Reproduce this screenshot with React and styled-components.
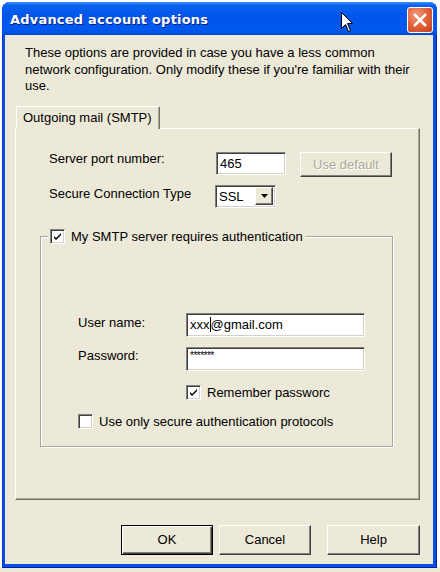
import React from 'react';
import styled, { createGlobalStyle } from 'styled-components';

const GlobalStyle = createGlobalStyle`
  html, body {
    margin: 0;
    padding: 0;
  }

  body {
    background: linear-gradient(to bottom, #fff 567px, #ECE9D8 567px);
    font-family: "Liberation Sans", Arial, sans-serif;
    font-size: 13px;
    color: #000;
  }

  #root {
    width: 440px;
    height: 572px;
    overflow: hidden;
  }
`;

const Window = styled.div`
  margin: 2px 3px 0 2px;
  width: 435px;
  height: 566px;
  display: flex;
  flex-direction: column;
  background: #0A4FE4;
  border-radius: 8px 8px 0 0;
  box-shadow: inset 1px 0 0 #0831D9, inset -1px -1px 0 #001EA0;
  overflow: hidden;
`;

const TitleBar = styled.div`
  position: relative;
  height: 33px;
  flex-shrink: 0;
  display: flex;
  align-items: flex-start;
  justify-content: space-between;
  background: linear-gradient(
    to bottom,
    #3C8EFF 0%,
    #0B62F0 10%,
    #0055EA 45%,
    #0059EE 85%,
    #0049D6 100%
  );
`;

const Title = styled.div`
  margin: 10px 0 0 8px;
  font-family: "DejaVu Sans", Verdana, sans-serif;
  font-weight: bold;
  font-size: 13px;
  letter-spacing: 0.2px;
  color: #fff;
  text-shadow: 1px 1px 0 #0A1E82;
`;

const CloseButton = styled.div`
  margin: 5px 4px 0 0;
  width: 24px;
  height: 24px;
  border: 1px solid #fff;
  border-radius: 3px;
  background: radial-gradient(circle at 35% 30%, #F09A7C 0%, #E06640 45%, #C4411D 100%);
  display: flex;
  align-items: center;
  justify-content: center;
`;

const Cursor = styled.svg`
  position: absolute;
  left: 339px;
  top: 10px;
`;

const Body = styled.div`
  flex: 1;
  margin: 0 4px 4px 3px;
  background: #ECE9D8;
  display: flex;
  flex-direction: column;
`;

const Intro = styled.p`
  margin: 10px 0 0 20px;
  line-height: 16.5px;
`;

const TabStrip = styled.div`
  margin: 11px 0 0 11px;
  display: flex;
`;

const Tab = styled.div`
  position: relative;
  z-index: 1;
  box-sizing: border-box;
  height: 23px;
  margin-bottom: -1px;
  padding: 3px 7px 0 6px;
  background: #ECE9D8;
  border-top: 1px solid #fff;
  border-left: 1px solid #fff;
  border-right: 1px solid #716F64;
  box-shadow: inset -1px 0 0 #ACA899;
  border-radius: 2px 2px 0 0;
  white-space: nowrap;
`;

const Panel = styled.div`
  box-sizing: border-box;
  margin-left: 10px;
  width: 405px;
  height: 372px;
  padding-top: 23px;
  border-top: 1px solid #fff;
  border-left: 1px solid #fff;
  border-right: 1px solid #716F64;
  border-bottom: 1px solid #716F64;
  box-shadow: inset -1px -1px 0 #ACA899;
`;

const Settings = styled.div`
  padding-left: 33px;
`;

const Row = styled.div`
  display: grid;
  grid-template-columns: ${p => p.$label}px auto auto;
  justify-content: start;
  align-items: start;
  margin-top: ${p => p.$top || 0}px;
`;

const Label = styled.span`
  line-height: 16px;
  margin-top: ${p => p.$offset || 0}px;
  white-space: nowrap;
`;

const Field = styled.div`
  box-sizing: border-box;
  width: ${p => p.$w}px;
  height: ${p => p.$h || 23}px;
  padding: 0 3px;
  background: #fff;
  border-top: 1px solid #808080;
  border-left: 1px solid #808080;
  border-right: 1px solid #fff;
  border-bottom: 1px solid #fff;
  box-shadow: inset 1px 1px 0 #404040, inset -1px -1px 0 #D4D0C8;
  display: flex;
  align-items: ${p => (p.$top ? 'flex-start' : 'center')};
  white-space: nowrap;
  overflow: hidden;
`;

const Caret = styled.span`
  display: inline-block;
  width: 1px;
  height: 15px;
  background: #000;
  vertical-align: middle;
`;

const Stars = styled.span`
  font-size: 10px;
  letter-spacing: -0.5px;
  margin-top: 2px;
`;

const SelectBox = styled(Field)`
  justify-content: space-between;
  padding: 0 2px 0 3px;
`;

const DropButton = styled.div`
  box-sizing: border-box;
  width: 18px;
  height: 18px;
  background: #ECE9D8;
  border-top: 1px solid #fff;
  border-left: 1px solid #fff;
  border-right: 1px solid #404040;
  border-bottom: 1px solid #404040;
  box-shadow: inset -1px -1px 0 #808080;
  display: flex;
  align-items: center;
  justify-content: center;
`;

const Button = styled.div`
  box-sizing: border-box;
  width: ${p => p.$w || 92}px;
  height: ${p => p.$h || 30}px;
  margin-left: ${p => p.$gap || 0}px;
  display: flex;
  align-items: center;
  justify-content: center;
  background: #ECE9D8;
  border-top: 1px solid #fff;
  border-left: 1px solid #fff;
  border-right: 1px solid #404040;
  border-bottom: 1px solid #404040;
  box-shadow: inset -1px -1px 0 #808080;
  color: ${p => (p.$disabled ? '#ACA899' : '#000')};
  text-shadow: ${p => (p.$disabled ? '1px 1px 0 #fff' : 'none')};
`;

const DefaultButton = styled(Button)`
  border: 1px solid #000;
  box-shadow: inset 1px 1px 0 #fff, inset -1px -1px 0 #404040, inset -2px -2px 0 #808080;
`;

const Group = styled.fieldset`
  box-sizing: border-box;
  margin: 21px 0 0 24px;
  width: 353px;
  padding: 0 0 17px 37px;
  border: 1px solid #ACA899;
  box-shadow: inset 1px 1px 0 #fff, 1px 1px 0 #fff;
  min-width: 0;
`;

const Legend = styled.legend`
  margin-left: -30px;
  padding: 0 2px;
  background: #ECE9D8;
  display: flex;
  align-items: center;
`;

const CheckRow = styled.div`
  display: flex;
  align-items: center;
  gap: 6px;
  margin: ${p => p.$top || 0}px 0 0 ${p => p.$left || 0}px;
  white-space: nowrap;
`;

const Box = styled.span`
  box-sizing: border-box;
  width: 15px;
  height: 15px;
  flex-shrink: 0;
  background: #fff;
  border-top: 1px solid #808080;
  border-left: 1px solid #808080;
  border-right: 1px solid #fff;
  border-bottom: 1px solid #fff;
  box-shadow: inset 1px 1px 0 #404040, inset -1px -1px 0 #D4D0C8;
  display: flex;
  align-items: center;
  justify-content: center;
`;

const Footer = styled.div`
  margin: 25px 13px 0 0;
  display: flex;
  justify-content: flex-end;
  gap: 6px;
`;

const Check = ({ checked }) => (
  <Box>
    {checked && (
      <svg width="9" height="9" viewBox="0 0 9 9">
        <path d="M1 4 L3 6 L8 1 L8 3 L3 8 L1 6 Z" fill="#000" />
      </svg>
    )}
  </Box>
);

export default function App() {
  return (
    <>
      <GlobalStyle />
      <Window>
        <TitleBar>
          <Title>Advanced account options</Title>
          <Cursor width="13" height="21" viewBox="0 0 13 21">
            <path
              d="M0.5 0.5 L0.5 16.5 L4.5 12.5 L7.5 19.5 L9.5 18.5 L6.5 11.5 L11.5 11.5 Z"
              fill="#fff"
              stroke="#000"
              strokeWidth="1"
            />
          </Cursor>
          <CloseButton>
            <svg width="14" height="14" viewBox="0 0 14 14">
              <path d="M2 2 L12 12 M12 2 L2 12" stroke="#fff" strokeWidth="2.6" strokeLinecap="square" />
            </svg>
          </CloseButton>
        </TitleBar>

        <Body>
          <Intro>
            These options are provided in case you have a less common
            <br />
            network configuration. Only modify these if you're familiar with their
            <br />
            use.
          </Intro>

          <TabStrip>
            <Tab>Outgoing mail (SMTP)</Tab>
          </TabStrip>

          <Panel>
            <Settings>
              <Row $label={167}>
                <Label $offset={-1}>Server port number:</Label>
                <Field $w={70}>465</Field>
                <Button $w={92} $h={25} $gap={14} $disabled>
                  Use default
                </Button>
              </Row>

              <Row $label={166} $top={8}>
                <Label $offset={1}>Secure Connection Type</Label>
                <SelectBox $w={61}>
                  SSL
                  <DropButton>
                    <svg width="7" height="4" viewBox="0 0 7 4">
                      <path d="M0 0 L7 0 L3.5 4 Z" fill="#000" />
                    </svg>
                  </DropButton>
                </SelectBox>
              </Row>
            </Settings>

            <Group>
              <Legend>
                <CheckRow>
                  <Check checked />
                  My SMTP server requires authentication
                </CheckRow>
              </Legend>

              <Row $label={108} $top={69}>
                <Label $offset={2}>User name:</Label>
                <Field $w={179} $h={24}>
                  xxx<Caret />@gmail.com
                </Field>
              </Row>

              <Row $label={108} $top={10}>
                <Label $offset={1}>Password:</Label>
                <Field $w={179} $h={24} $top>
                  <Stars>*******</Stars>
                </Field>
              </Row>

              <CheckRow $top={14} $left={108}>
                <Check checked />
                Remember passworc
              </CheckRow>

              <CheckRow $top={14}>
                <Check />
                Use only secure authentication protocols
              </CheckRow>
            </Group>
          </Panel>

          <Footer>
            <DefaultButton>OK</DefaultButton>
            <Button>Cancel</Button>
            <Button $w={93} $gap={10}>Help</Button>
          </Footer>
        </Body>
      </Window>
    </>
  );
}
